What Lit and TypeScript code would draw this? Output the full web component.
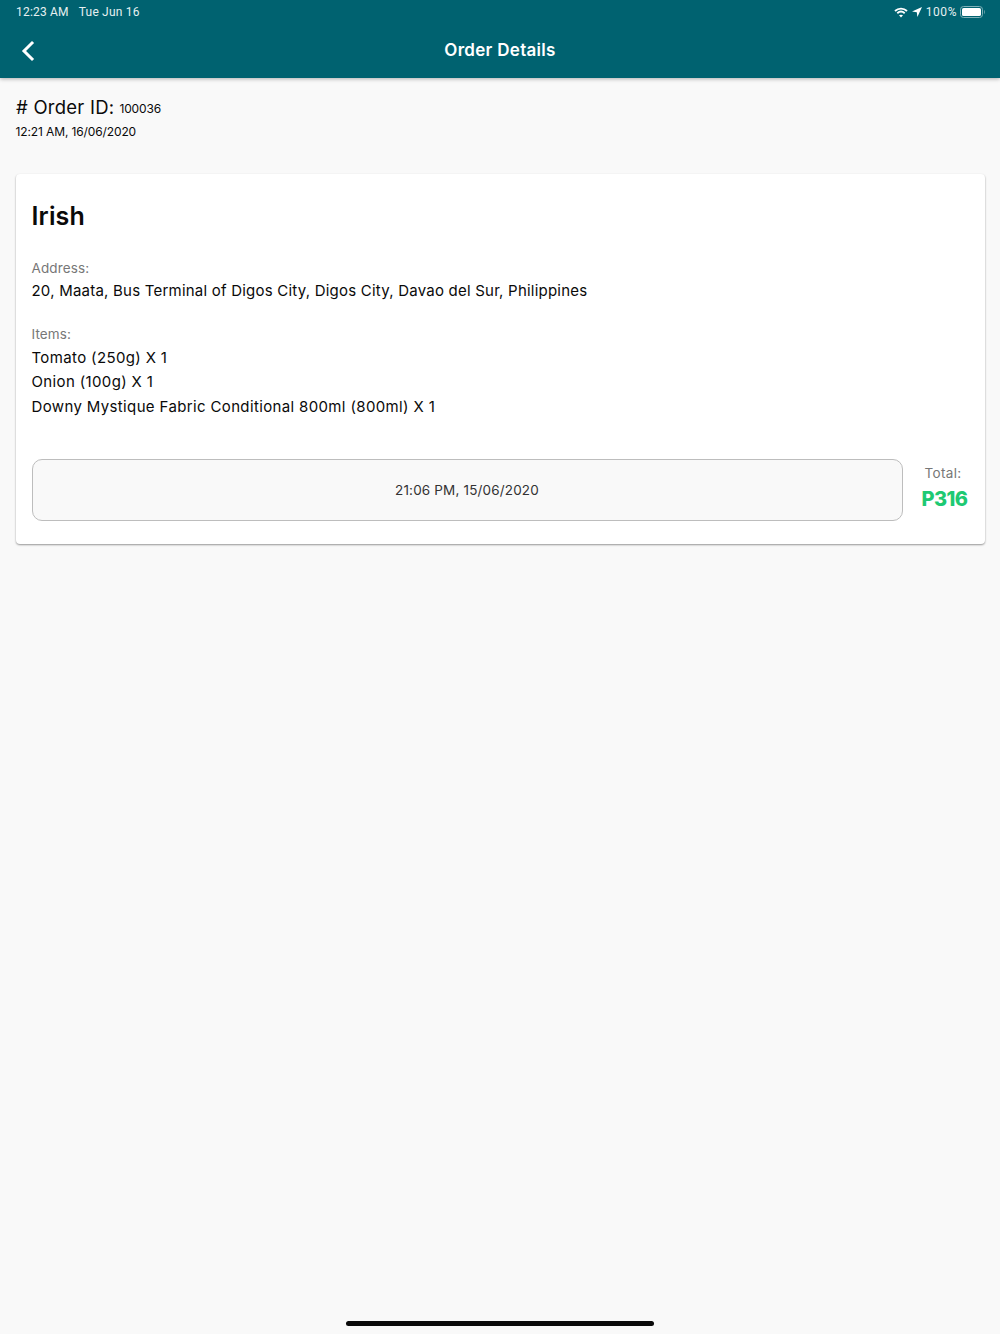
import { LitElement, html, css } from "lit";
import { customElement } from "lit/decorators.js";

@customElement("app-root")
export class AppRoot extends LitElement {
  static styles = css`
    :host { display: flex; flex-direction: column; height: 1334px; background: #f9f9f9; font-family: Inter, "Liberation Sans", sans-serif; color: #0a0a0a; position: relative; overflow: hidden; }
    .bar { background: #006270; height: 78px; color: #fff; box-shadow: 0 1px 4px rgba(0,0,0,.3); display: flex; flex-direction: column; flex: none; }
    .status { height: 24px; padding: 0 14px 0 16px; display: flex; align-items: center; justify-content: space-between; font: 12px/24px Roboto, sans-serif; letter-spacing: .2px; color: #e6f0f1; }
    .status .l { display: flex; gap: 10px; }
    .status .r { display: flex; align-items: center; gap: 3px; letter-spacing: .55px; }
    .nav { flex: 1; display: flex; align-items: center; justify-content: center; position: relative; padding-bottom: 3px; }
    .back { position: absolute; left: 20px; top: 16px; }
    .title { font-size: 17px; font-weight: 600; letter-spacing: .3px; }
    .head { padding: 17px 16px 0; height: 96px; box-sizing: border-box; flex: none; }
    .oid { display: flex; align-items: baseline; gap: 5px; font-size: 18.5px; line-height: 24px; letter-spacing: .25px; }
    .oid span { font-size: 12px; letter-spacing: -.15px; position: relative; top: -1px; }
    .date { font-size: 12px; line-height: 16px; margin-top: 2px; letter-spacing: -.12px; margin-left: -.5px; }
    .card { margin: 0 15.5px 0 16px; background: #fff; border-radius: 4px; box-shadow: 0 1px 2px rgba(0,0,0,.4); padding: 25px 17px 23.5px 15.5px; display: flex; flex-direction: column; }
    .name { font-size: 25px; font-weight: 600; line-height: 34px; letter-spacing: .15px; }
    .label { font-size: 13.5px; line-height: 18px; color: #777; letter-spacing: .13px; }
    .addr { margin-top: 26px; }
    .val { font-size: 15px; line-height: 24.5px; font-weight: 400; letter-spacing: .22px; }
    .addr .val { margin-top: 2px; }
    .items { margin-top: 21px; }
    .items .val { letter-spacing: .36px; }
    .items .label { margin-bottom: 3px; }
    .foot { display: flex; align-items: stretch; margin-top: 39.5px; gap: 20px; }
    .time { flex: 1; height: 62px; box-sizing: border-box; border: 1px solid #bdbdbd; border-radius: 10px; background: #f9f9f9; display: flex; align-items: center; justify-content: center; font-size: 13.5px; color: #333; letter-spacing: .16px; }
    .total { width: 44px; margin-right: 1px; display: flex; flex-direction: column; align-items: center; }
    .total .label { margin-top: 5px; line-height: 18px; letter-spacing: .3px; margin-left: -3px; white-space: nowrap; }
    .price { font-size: 20px; font-weight: 800; color: #1ec973; line-height: 28px; margin-top: 3px; letter-spacing: -.6px; }
    .home { position: absolute; left: 346px; bottom: 8px; width: 308px; height: 5px; border-radius: 3px; background: #0a0a0a; }
  `;

  render() {
    return html`
      <div class="bar">
        <div class="status">
          <div class="l"><span>12:23 AM</span><span>Tue Jun 16</span></div>
          <div class="r">
            <svg width="14" height="11" viewBox="0 0 14 11" fill="none" stroke="#fff" stroke-width="1.9">
              <path d="M1 4 C4.5 .8 9.5 .8 13 4" />
              <path d="M3.3 6.2 C5.5 4.3 8.5 4.3 10.7 6.2" />
              <path d="M7 10.5 L5 8.3 C6 7.4 8 7.4 9 8.3 Z" fill="#fff" stroke="none" />
            </svg>
            <svg width="12" height="12" viewBox="0 0 12 12"><path d="M11 1 L1 5.6 L5.8 6.2 L6.4 11 Z" fill="#fff"/></svg>
            <span>100%</span>
            <svg width="26" height="12" viewBox="0 0 26 12">
              <rect x=".5" y=".5" width="22" height="11" rx="3" fill="none" stroke="#7fb0b7"/>
              <rect x="2" y="2" width="19" height="8" rx="1.6" fill="#fff"/>
              <path d="M24 4 C25 4.3 25 7.7 24 8 Z" fill="#7fb0b7"/>
            </svg>
          </div>
        </div>
        <div class="nav">
          <svg class="back" width="16" height="22" viewBox="0 0 16 22" fill="none" stroke="#fff" stroke-width="3" stroke-linecap="square"><path d="M12 3 L4 11 L12 19"/></svg>
          <div class="title">Order Details</div>
        </div>
      </div>
      <div class="head">
        <div class="oid"># Order ID: <span>100036</span></div>
        <div class="date">12:21 AM, 16/06/2020</div>
      </div>
      <div class="card">
        <div class="name">Irish</div>
        <div class="addr">
          <div class="label">Address:</div>
          <div class="val">20, Maata, Bus Terminal of Digos City, Digos City, Davao del Sur, Philippines</div>
        </div>
        <div class="items">
          <div class="label">Items:</div>
          <div class="val">Tomato (250g) X 1</div>
          <div class="val">Onion (100g) X 1</div>
          <div class="val">Downy Mystique Fabric Conditional 800ml (800ml) X 1</div>
        </div>
        <div class="foot">
          <div class="time">21:06 PM, 15/06/2020</div>
          <div class="total">
            <div class="label">Total:</div>
            <div class="price">P316</div>
          </div>
        </div>
      </div>
      <div class="home"></div>
    `;
  }
}
